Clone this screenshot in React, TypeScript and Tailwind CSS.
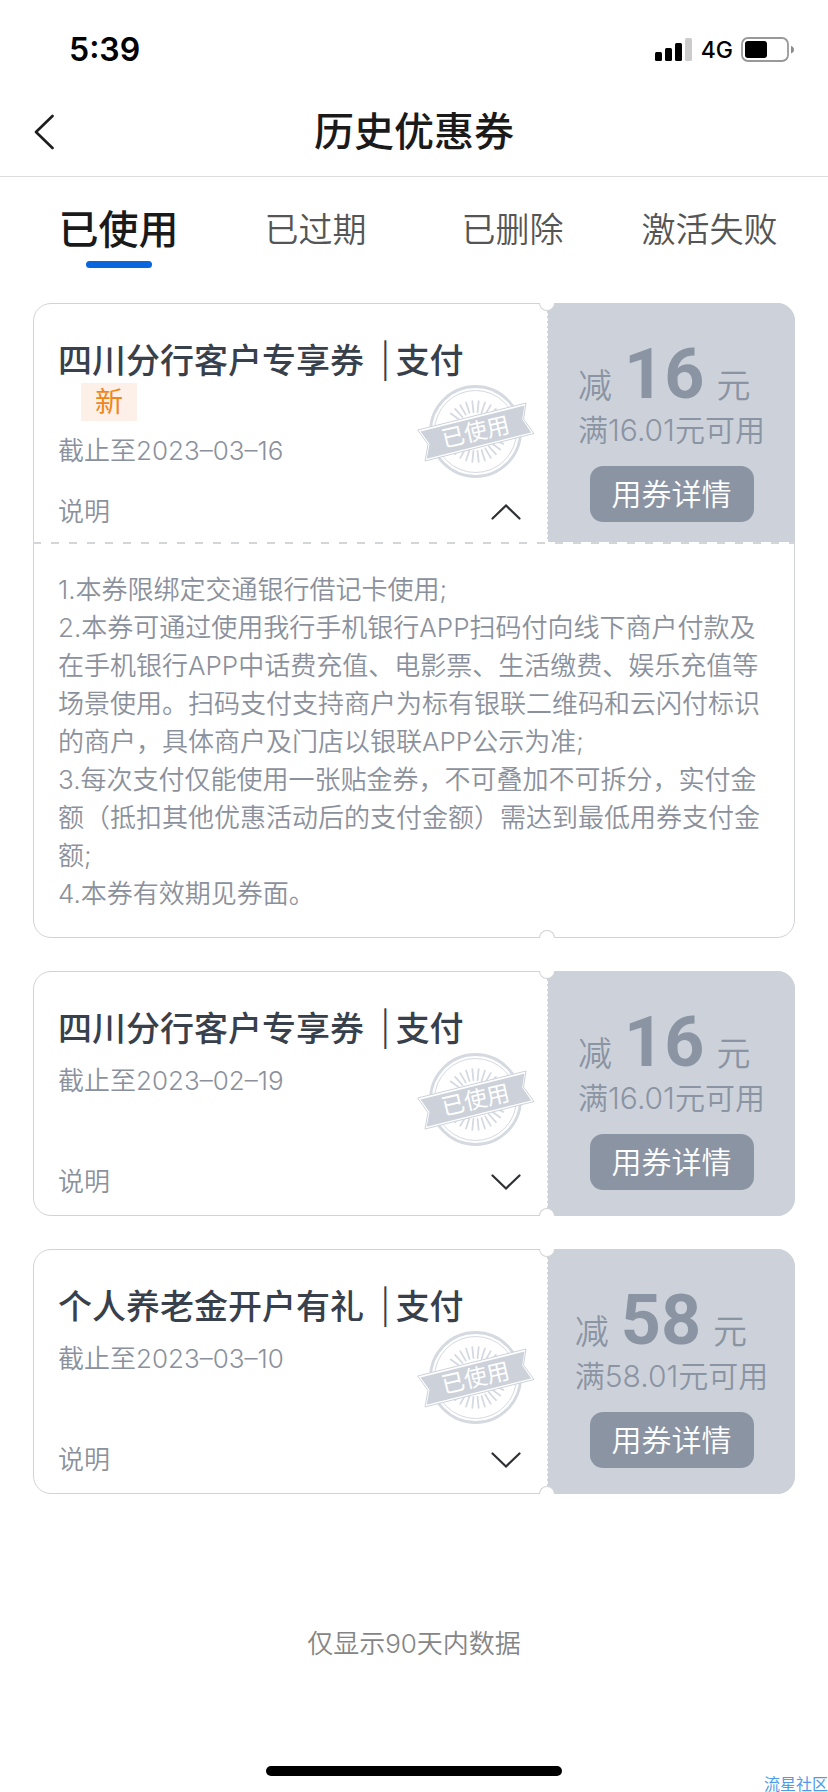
import { useState } from 'react';
import clsx from 'clsx';

type Coupon = {
  id: number;
  title: string;
  isNew: boolean;
  date: string;
  amount: string;
  limit: string;
};

const TABS = ['已使用', '已过期', '已删除', '激活失败'];

const COUPONS: Coupon[] = [
  {
    id: 1,
    title: '四川分行客户专享券',
    isNew: true,
    date: '2023–03–16',
    amount: '16',
    limit: '满16.01元可用',
  },
  {
    id: 2,
    title: '四川分行客户专享券',
    isNew: false,
    date: '2023–02–19',
    amount: '16',
    limit: '满16.01元可用',
  },
  {
    id: 3,
    title: '个人养老金开户有礼',
    isNew: false,
    date: '2023–03–10',
    amount: '58',
    limit: '满58.01元可用',
  },
];

const RULES = [
  '1.本券限绑定交通银行借记卡使用;',
  '2.本券可通过使用我行手机银行APP扫码付向线下商户付款及在手机银行APP中话费充值、电影票、生活缴费、娱乐充值等场景使用。扫码支付支持商户为标有银联二维码和云闪付标识的商户，具体商户及门店以银联APP公示为准;',
  '3.每次支付仅能使用一张贴金券，不可叠加不可拆分，实付金额（抵扣其他优惠活动后的支付金额）需达到最低用券支付金额;',
  '4.本券有效期见券面。',
];

const RAYS = [-60, -48, -36, -24, -12, 0, 12, 24, 36, 48];

function StatusBar() {
  return (
    <div className="flex h-[88px] items-center justify-between pt-3 pr-[33px] pl-[69px] text-black">
      <span className="text-[32px] leading-10 font-semibold">5:39</span>
      <div className="flex items-center gap-2">
        <svg width="38" height="24" viewBox="0 0 38 24">
          <rect x="0" y="14" width="7" height="9" rx="1.5" />
          <rect x="10" y="10" width="7" height="13" rx="1.5" />
          <rect x="20" y="5" width="7" height="18" rx="1.5" />
          <rect x="30" y="0" width="7" height="23" rx="1.5" fill="#cccccc" />
        </svg>
        <span className="text-[23px] leading-6 font-medium">4G</span>
        <svg width="54" height="26" viewBox="0 0 54 26">
          <rect
            x="1"
            y="1"
            width="46"
            height="23"
            rx="6"
            fill="none"
            stroke="#999999"
            strokeWidth="1.8"
          />
          <rect x="4" y="4" width="22" height="17" rx="3" />
          <path d="M50 9c2 .6 3 2 3 3.7s-1 3.1-3 3.7z" fill="#8c8c8c" />
        </svg>
      </div>
    </div>
  );
}

function Stamp() {
  return (
    <svg
      width="118"
      height="96"
      viewBox="0 0 118 96"
      className="absolute top-[80px] right-3"
    >
      <g fill="none" stroke="#d5d9e0">
        <circle cx="58.5" cy="47.5" r="45" strokeWidth="2.8" />
        <circle cx="58.5" cy="47.5" r="41" strokeWidth="1" />
        {RAYS.map((deg) => (
          <g key={deg} strokeWidth="1.8" strokeLinecap="round">
            <path d="M58.5 28V17" transform={`rotate(${deg + 6} 58.5 47.5)`} />
            <path d="M58.5 67V78" transform={`rotate(${deg - 6} 58.5 47.5)`} />
          </g>
        ))}
      </g>
      <path
        d="M.7 46 109 19l-2.500 16L117 49.500 8 77l3-16.500z"
        fill="#ffffff"
        stroke="#cdd2da"
        strokeWidth="1"
      />
      <path
        d="M3.500 47.500 107.500 21.500l-2.300 13.700 9 13.300L9.700 74.800l2.800-14.800z"
        fill="#cdd2da"
      />
      <text
        x="58.5"
        y="56"
        textAnchor="middle"
        fontSize="23"
        fill="#ffffff"
        transform="rotate(-13 58.5 47.5)"
      >
        已使用
      </text>
    </svg>
  );
}

function CouponCard({ v, open, onToggle }: { v: Coupon; open: boolean; onToggle: () => void }) {
  return (
    <article className="relative rounded-[18px] border border-[#d2d3d6]">
      <div className="flex">
        <div
          className={clsx(
            'relative flex flex-1 flex-col pt-[35px] pr-6 pl-6',
            open ? 'min-h-[238px] pb-3' : 'min-h-[243px] pb-[15px]',
          )}
        >
          <h2 className="text-[34px] leading-[44px] font-medium text-[#38404c]">
            {v.title}
            <span className="pr-[5px] pl-4 font-light">|</span>支付
          </h2>
          {v.isNew && (
            <span className="ml-[23px] w-14 bg-[#fdf0e8] text-center text-[28px] leading-[38px] text-[#f08519]">
              新
            </span>
          )}
          <p className="mt-3 text-[26px] leading-9 font-[350] text-[#8b919c]">截止至{v.date}</p>
          <button
            type="button"
            aria-expanded={open}
            onClick={onToggle}
            className="mt-auto flex items-center justify-between text-[26px] leading-9 font-[350] text-[#8b919c]"
          >
            说明
            <svg
              width="30"
              height="18"
              viewBox="0 0 30 18"
              fill="none"
              stroke="#2e3034"
              strokeWidth="2.2"
              strokeLinecap="round"
              className={clsx('mr-0.5', open && 'rotate-180')}
            >
              <path d="M1.5 2.5 15 15.500 28.500 2.500" />
            </svg>
          </button>
          <Stamp />
        </div>
        <div
          className={clsx(
            '-mt-px -mr-px flex w-[248px] flex-col items-center rounded-tr-[18px] border-l border-dashed border-white bg-[#cdd2da] pt-[35px] text-[#8b94a3]',
            !open && '-mb-px rounded-br-[18px]',
          )}
        >
          <div>
            <div className="flex items-baseline text-[34px] leading-none font-[350]">
              减
              <strong className="mx-3 font-['Roboto',sans-serif] text-[70px] leading-[72px] font-bold">
                {v.amount}
              </strong>
              元
            </div>
            <p className="text-[30px] leading-10 font-[350]">{v.limit}</p>
          </div>
          <button
            type="button"
            className="mt-4 h-14 w-[164px] rounded-[13px] bg-[#8b94a3] text-[30px] leading-10 font-[350] text-white"
          >
            用券详情
          </button>
        </div>
      </div>
      {open && (
        <>
          <div className="-mx-px h-0.5 bg-[repeating-linear-gradient(90deg,#d3d5d9_0_8px,#ffffff_8px_18px)]" />
          <div className="px-6 pt-[27px] pb-6 text-[26px] leading-[38px] font-[350] text-[#8b919c]">
            {RULES.map((rule) => (
              <p key={rule}>{rule}</p>
            ))}
          </div>
        </>
      )}
      {/* ticket notches */}
      <i className="absolute -top-px right-[239px] h-2 w-4 rounded-b-[8px] border border-t-0 border-[#d2d3d6] bg-white" />
      <i className="absolute right-[239px] -bottom-px h-2 w-4 rounded-t-[8px] border border-b-0 border-[#d2d3d6] bg-white" />
    </article>
  );
}

export default function App() {
  const [tab, setTab] = useState(0);
  const [openId, setOpenId] = useState(1);

  return (
    <div className="relative flex min-h-screen flex-col overflow-hidden bg-white font-['Inter','Noto_Sans_CJK_SC',sans-serif]">
      <StatusBar />
      <header className="grid h-[89px] grid-cols-[60px_1fr_60px] items-center border-b border-[#dcdcdc]">
        <button type="button" aria-label="返回" className="flex justify-end pr-1.5">
          <svg
            width="20"
            height="36"
            viewBox="0 0 20 36"
            fill="none"
            stroke="#1c1c1c"
            strokeWidth="2.6"
            strokeLinecap="round"
            strokeLinejoin="round"
          >
            <path d="M18.5 2 2 18l16.500 16" />
          </svg>
        </button>
        <h1 className="text-center text-[40px] leading-[52px] font-medium text-[#1a1a1a]">
          历史优惠券
        </h1>
      </header>
      <nav className="grid grid-cols-4 px-5 pt-[27px]">
        {TABS.map((name, i) => (
          <button
            key={name}
            type="button"
            onClick={() => setTab(i)}
            className={clsx(
              'flex flex-col items-center leading-[52px]',
              i === tab
                ? 'text-[40px] font-medium text-[#1a1a1a]'
                : 'text-[34px] font-[350] text-[#555555]',
            )}
          >
            {name}
            {i === tab && <span className="mt-[5px] h-[7px] w-[66px] rounded-full bg-[#0a66dc]" />}
          </button>
        ))}
      </nav>
      <main className="mt-[35px] flex flex-col gap-[33px] px-[33px]">
        {COUPONS.map((v) => (
          <CouponCard
            key={v.id}
            v={v}
            open={v.id === openId}
            onToggle={() => setOpenId(v.id === openId ? 0 : v.id)}
          />
        ))}
      </main>
      <p className="mt-[132px] text-center text-[26px] leading-9 font-[350] text-[#858585]">
        仅显示90天内数据
      </p>
      <div className="mx-auto mt-auto mb-4 h-2.5 w-[296px] rounded-full bg-black" />
      <span className="absolute right-0 bottom-0 text-[16px] leading-4 whitespace-nowrap text-[#4f9bea]">
        流星社区
      </span>
    </div>
  );
}
